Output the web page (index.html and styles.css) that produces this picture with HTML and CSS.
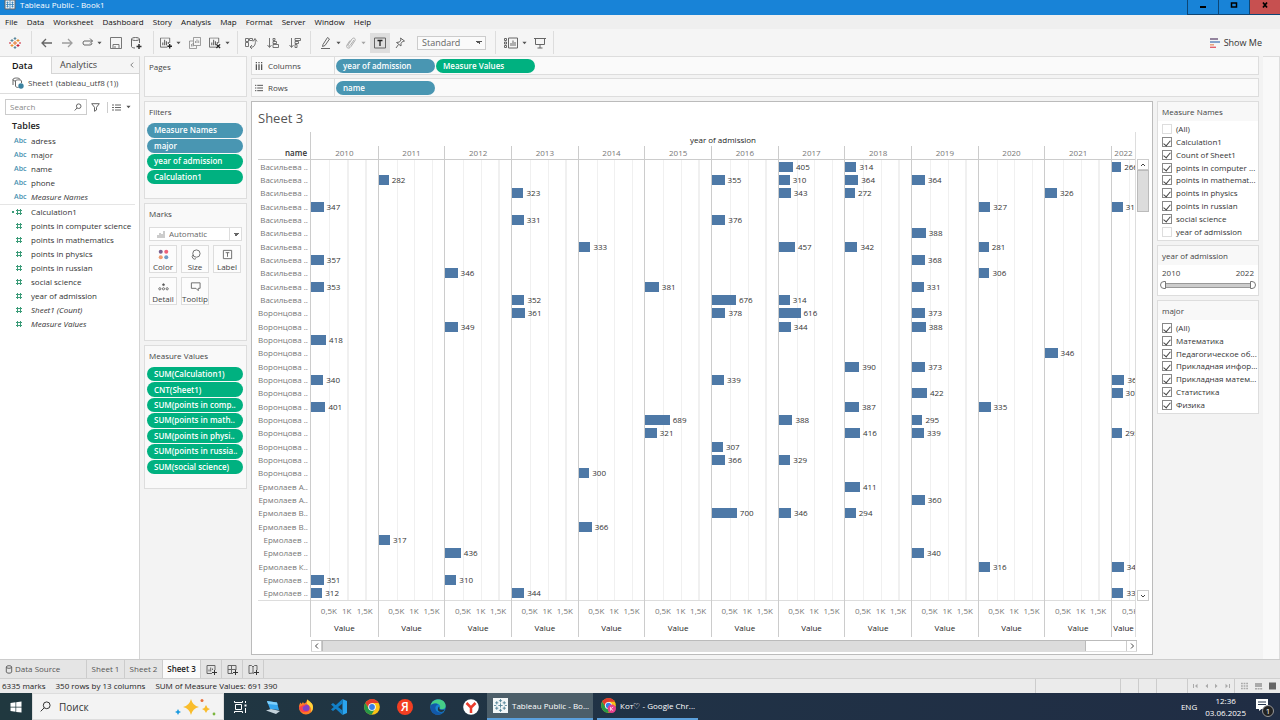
FILE: index.html
```html
<!DOCTYPE html>
<html lang="en">
<head>
<meta charset="utf-8">
<title>Tableau Public - Book1</title>
<link rel="stylesheet" href="styles.css">
</head>
<body>
<svg class="defs" aria-hidden="true">
  <symbol id="tableau" viewBox="0 0 12 12"><path d="M6 4v4M4 6h4" stroke="#e8762c"/><path d="M6 0v3M4.700 1.500h2.600M6 9v3M4.700 10.500h2.600M3 2v3M1.500 3.500h3" stroke="#5b879b"/><path d="M9 2v3M7.500 3.500h3M3 7v3M1.500 8.500h3" stroke="#eb912c"/><path d="M9 7v3M7.500 8.500h3M0 6h2M10 6h2" stroke="#c72035"/></symbol>
  <symbol id="hash" viewBox="0 0 8 8"><path d="M2.500 1v6M5.500 1v6M1 2.500h6M1 5.500h6" stroke="#3b9b78" fill="none"/></symbol>
  <symbol id="chart" viewBox="0 0 13 12"><path d="M8 10.500H.5v-10h10V6" /><path d="M3 8.500v-3M5 8.500v-6M7 8.500V4M9 5v2" stroke-width="1.200"/></symbol>
  <symbol id="caret" viewBox="0 0 6 4"><path d="M.5.5h5L3 3.500z" fill="#555" stroke="none"/></symbol>
</svg>

<header class="titlebar">
  <svg class="app-icon" viewBox="0 0 10 10"><path d="M0 0h10v9H0z" fill="#e7f2fb"/><path d="M5 0v9M1 4.500h8M2.500 1.500v6M7.500 1.500v6M1.500 2.500h2M6.500 2.500h2M1.500 6.500h2M6.500 6.500h2" stroke="#3a83b8" stroke-width=".8"/></svg>
  <span>Tableau Public - Book1</span>
  <div class="win-buttons">
    <button aria-label="Minimize"><svg viewBox="0 0 8 6"><path d="M1 4h6v2H1z"/></svg></button>
    <button aria-label="Maximize"><svg viewBox="0 0 8 6"><path d="M1.500 1h5v4h-5z" fill="none" stroke="#000" stroke-width="1.500"/></svg></button>
    <button class="close" aria-label="Close"><svg viewBox="0 0 8 6"><path d="M2 .5l4 5M6 .5l-4 5" fill="none" stroke="#000" stroke-width="1.700"/></svg></button>
  </div>
</header>

<nav class="menubar">
  <button>File</button><button>Data</button><button>Worksheet</button><button>Dashboard</button><button>Story</button><button>Analysis</button><button>Map</button><button>Format</button><button>Server</button><button>Window</button><button>Help</button>
</nav>

<div class="toolbar">
  <div class="group g1"><button aria-label="Start page"><svg class="ic"><use href="#tableau"/></svg></button></div>
  <div class="group g2">
    <button aria-label="Undo"><svg class="ic" viewBox="0 0 12 12"><path d="M11 6H1M5 2L1 6l4 4" stroke-width="1.300"/></svg></button>
    <button aria-label="Redo"><svg class="ic dim" viewBox="0 0 12 12"><path d="M1 6h10M7 2l4 4-4 4" stroke-width="1.300"/></svg></button>
    <button aria-label="Replay"><svg class="ic" viewBox="0 0 12 12"><path d="M9 8H3a2.500 2.500 0 0 1 0-4h8.500M9 1.500L11.500 4 9 6.500M9 8a2 2 0 0 0 2-2"/></svg><svg class="caret"><use href="#caret"/></svg></button>
    <button aria-label="Save"><svg class="ic" viewBox="0 0 12 12"><path d="M.5.500h11v11H.5zM3 11.500v-4h6v4M5 9v2" stroke="#777"/></svg></button>
    <button aria-label="New data source"><svg class="ic" viewBox="0 0 12 12"><ellipse cx="5.500" cy="2" rx="4" ry="1.500"/><path d="M1.500 2v7.500c0 1 2 1.500 3.500 1.500M9.500 2v4"/><path d="M9 7v5M6.500 9.500h5" stroke="#333" stroke-width="1.500"/></svg></button>
  </div>
  <div class="group g3">
    <button aria-label="New worksheet"><svg class="ic" viewBox="0 0 13 12"><use href="#chart"/><path d="M10.500 7v5M8 9.500h5" stroke="#222" stroke-width="1.500"/></svg><svg class="caret"><use href="#caret"/></svg></button>
    <button aria-label="Duplicate"><svg class="ic dim" viewBox="0 0 12 12"><path d="M4.500.500h7v8h-7zM4 4H.5v7.500h7V9M6.500 6V4M8 6V2.500M9.700 6V3.500M2.500 9.500V7M4 9.500V6"/></svg></button>
    <button aria-label="Clear sheet"><svg class="ic" viewBox="0 0 13 12"><use href="#chart"/><path d="M8 7.500l4 4M12 7.500l-4 4" stroke="#222" stroke-width="1.500"/></svg><svg class="caret"><use href="#caret"/></svg></button>
  </div>
  <div class="group g4">
    <button aria-label="Swap"><svg class="ic" viewBox="0 0 12 12"><path d="M.5 1.500h3v3h-3zM4.500 1.500h3v2h-3zM.5 5.500h3v4h-3zM9 2c2 1 2 6-1 8H5M7 8l-2 2 2 2M8 4.500l2-3 2 3" stroke-width=".9"/></svg></button>
    <button aria-label="Sort ascending"><svg class="ic" viewBox="0 0 12 12"><path d="M2.500 1v9M.5 8l2 2.500 2-2.500M6 1.500h2v2H6zM6 4.500h3.500v2H6zM6 7.500h5.500v3H6z" stroke-width=".9"/></svg></button>
    <button aria-label="Sort descending"><svg class="ic" viewBox="0 0 12 12"><path d="M2.500 1v9M.5 8l2 2.500 2-2.500M6 1.500h5.500v2H6zM6 4.500h3.500v2H6zM6 7.500h2v3H6z" stroke-width=".9"/></svg></button>
  </div>
  <div class="group g5">
    <button aria-label="Highlight"><svg class="ic" viewBox="0 0 12 12"><path d="M1 11.500h9M3 7.500L7.500.500 9.500 2 5 8.500 2.500 9.500z"/></svg><svg class="caret"><use href="#caret"/></svg></button>
    <button class="faded" aria-label="Group members"><svg class="ic" viewBox="0 0 12 12"><path d="M9 3L5 8.500c-1 1.500-2.500.5-2-.5L7 2c1.500-2 4-.5 3 1.500l-4 6c-2 3-5.500 1.500-4-1.500l3-4.500"/></svg><svg class="caret"><use href="#caret"/></svg></button>
    <button class="on" aria-label="Show mark labels" aria-pressed="true"><svg class="ic" viewBox="0 0 12 12"><path d="M.5 1h11v10H.5z"/><path d="M3.500 3.500h5M6 3.500v5.500" stroke="#222" stroke-width="1.300"/></svg></button>
    <button aria-label="Pin"><svg class="ic" viewBox="0 0 12 12"><path d="M6.500 1l4 3-2 .5-1.500 2L7 9 2.500 5.500 5.500 5l1.500-2zM4.500 7.500L2 11"/></svg></button>
    <select aria-label="Fit"><option>Standard</option></select>
  </div>
  <div class="group g6">
    <button aria-label="Show cards"><svg class="ic wide" viewBox="0 0 14 12"><path d="M.5 1.500h2v2h-2zM.5 5h2v2h-2zM.5 8.500h2v2h-2zM4.500 1h9v10h-9zM7 9V6M9 9V3.500M11 9V5"/></svg><svg class="caret"><use href="#caret"/></svg></button>
    <button aria-label="Presentation mode"><svg class="ic" viewBox="0 0 12 12"><path d="M0 1.500h12M1.500 1.500v6h9v-6M6 7.500v3.500M3.500 11h5"/></svg></button>
  </div>
  <button class="showme"><svg class="ic" viewBox="0 0 10 10"><path d="M0 1h8" stroke="#7b6888" stroke-width="1.600"/><path d="M0 4h10" stroke="#6a8fc0" stroke-width="1.600"/><path d="M0 6.800h4" stroke="#e8a07a" stroke-width="1.500"/><path d="M0 9.300h6" stroke="#e5606b" stroke-width="1.400"/></svg>Show Me</button>
</div>

<main class="workspace">
  <aside class="data-pane">
    <div class="pane-tabs"><button class="active">Data</button><button>Analytics <svg class="chev" viewBox="0 0 5 8"><path d="M4 1L1 4l3 3"/></svg></button></div>
    <div class="source"><svg class="ic" viewBox="0 0 12 12"><path d="M1 2.500c0-2 7-2 7 0M1 2.500V8M1 2.500c0 1.500 2 1.500 3 1.500M3.500 4v5c0 1 1.500 1.500 3 1.500M3.500 4c0-1.500 6-1.500 6 0v2"/><circle cx="9" cy="9" r="2.700" fill="#3c82a0" stroke="none"/></svg>Sheet1 (tableau_utf8 (1))</div>
    <div class="searchrow">
      <label class="search"><input type="text" placeholder="Search" aria-label="Search fields"><svg viewBox="0 0 8 8"><circle cx="4.700" cy="3.200" r="2.300"/><path d="M3 5L.7 7.500"/></svg></label>
      <button aria-label="Filter"><svg class="funnel" viewBox="0 0 9 9"><path d="M.7.700h7.600L5.500 4.300V7l-2 1.300v-4z"/></svg></button>
      <button class="viewas" aria-label="View as"><svg class="listic" viewBox="0 0 9 7"><path d="M0 1h2M3 1h6M0 3.500h2M3 3.500h6M0 6h2M3 6h6"/></svg><svg class="caret"><use href="#caret"/></svg></button>
    </div>
    <h2>Tables</h2>
    <ul class="fields dims">
      <li><i>Abc</i>adress</li><li><i>Abc</i>major</li><li><i>Abc</i>name</li><li><i>Abc</i>phone</li><li><i>Abc</i><em>Measure Names</em></li>
    </ul>
    <ul class="fields">
      <li class="calc"><svg><use href="#hash"/></svg>Calculation1</li>
      <li><svg><use href="#hash"/></svg>points in computer science</li>
      <li><svg><use href="#hash"/></svg>points in mathematics</li>
      <li><svg><use href="#hash"/></svg>points in physics</li>
      <li><svg><use href="#hash"/></svg>points in russian</li>
      <li><svg><use href="#hash"/></svg>social science</li>
      <li><svg><use href="#hash"/></svg>year of admission</li>
      <li><svg><use href="#hash"/></svg><em>Sheet1 (Count)</em></li>
      <li><svg><use href="#hash"/></svg><em>Measure Values</em></li>
    </ul>
  </aside>

  <div class="cards">
    <section class="card pages"><h3>Pages</h3></section>
    <section class="card filters"><h3>Filters</h3>
      <div class="pills"><span class="pill blue">Measure Names</span><span class="pill blue">major</span><span class="pill">year of admission</span><span class="pill">Calculation1</span></div>
    </section>
    <section class="card marks"><h3>Marks</h3>
      <div class="marktype"><svg viewBox="0 0 8 8"><path d="M1 8V5M3 8V3M5 8V4M7 8V1"/></svg><select aria-label="Mark type"><option>Automatic</option></select></div>
      <div class="markbtns">
        <button><svg viewBox="0 0 12 12"><g stroke="none"><circle cx="3" cy="3" r="2.200" fill="#7b6190"/><circle cx="9" cy="3" r="2.200" fill="#ee6179"/><circle cx="3" cy="9" r="2.200" fill="#ef9d70"/><circle cx="9" cy="9" r="2.200" fill="#6f9bc6"/></g></svg>Color</button>
        <button><svg viewBox="0 0 12 12"><circle cx="7" cy="5" r="4"/><path d="M3.500 6.500a2.500 2.500 0 1 0 3 4"/><path d="M3.300 6.500l.5 1"/></svg>Size</button>
        <button><svg viewBox="0 0 12 12"><path d="M1.500 1.500h9v9h-9zM4 4h4M6 4v4.500"/></svg>Label</button>
        <button><svg viewBox="0 0 12 12"><circle cx="6" cy="4" r="1" fill="#555"/><circle cx="2" cy="8.500" r="1.200"/><circle cx="6" cy="8.500" r="1.200"/><circle cx="10" cy="8.500" r="1.200"/></svg>Detail</button>
        <button><svg viewBox="0 0 12 12"><path d="M1.500 2h9.500v6H9v2.500L6.500 8h-5z"/></svg>Tooltip</button>
      </div>
    </section>
    <section class="card measures"><h3>Measure Values</h3>
      <div class="pills"><span class="pill">SUM(Calculation1)</span><span class="pill">CNT(Sheet1)</span><span class="pill">SUM(points in comp..</span><span class="pill">SUM(points in math..</span><span class="pill">SUM(points in physi..</span><span class="pill">SUM(points in russia..</span><span class="pill">SUM(social science)</span></div>
    </section>
  </div>

  <div class="center">
    <div class="shelves">
      <div class="shelf"><span class="shelf-name"><svg viewBox="0 0 9 9"><path d="M1.500 0v1.500M4.500 0v1.500M7.500 0v1.500M1.500 2.500V9M4.500 2.500V9M7.500 2.500V9" stroke-width="1.300"/></svg>Columns</span><span class="pill blue">year of admission</span><span class="pill">Measure Values</span></div>
      <div class="shelf"><span class="shelf-name"><svg viewBox="0 0 9 9"><path d="M0 1.500h1.500M0 4.500h1.500M0 7.500h1.500M2.500 1.500H9M2.500 4.500H9M2.500 7.500H9"/></svg>Rows</span><span class="pill blue">name</span></div>
    </div>
    <div class="below">
      <section class="view">
        <h1>Sheet 3</h1>
        <div class="viz">
          <div class="names"><div class="names-head">name</div><div class="rows" id="names"></div></div>
          <div class="plot">
            <div class="plot-title">year of admission</div>
            <div class="cols" id="cols"></div>
          </div>
          <div class="vscroll"><button aria-label="Scroll up"><svg viewBox="0 0 8 8"><path d="M2 5l2-2 2 2"/></svg></button><span class="thumb"></span><button aria-label="Scroll down"><svg viewBox="0 0 8 8"><path d="M2 3l2 2 2-2"/></svg></button></div>
        </div>
        <div class="hscroll"><button aria-label="Scroll left"><svg viewBox="0 0 8 8"><path d="M5 1.500L2.500 4 5 6.500"/></svg></button><span class="thumb"></span><button aria-label="Scroll right"><svg viewBox="0 0 8 8"><path d="M3 1.500L5.500 4 3 6.500"/></svg></button></div>
      </section>
      <aside class="quick">
        <section class="qcard"><h3>Measure Names</h3>
          <div class="checks">
            <label><input type="checkbox" class="pale">(All)</label>
            <label><input type="checkbox" checked>Calculation1</label>
            <label><input type="checkbox" checked>Count of Sheet1</label>
            <label><input type="checkbox" checked>points in computer ...</label>
            <label><input type="checkbox" checked>points in mathemat...</label>
            <label><input type="checkbox" checked>points in physics</label>
            <label><input type="checkbox" checked>points in russian</label>
            <label><input type="checkbox" checked>social science</label>
            <label><input type="checkbox" class="pale">year of admission</label>
          </div>
        </section>
        <section class="qcard yearcard"><h3>year of admission</h3>
          <div class="bounds"><span>2010</span><span>2022</span></div>
          <div class="slider"><input type="range" min="2010" max="2022" value="2010" aria-label="From year"><input class="hi" type="range" min="2010" max="2022" value="2022" aria-label="To year"></div>
        </section>
        <section class="qcard"><h3>major</h3>
          <div class="checks">
            <label><input type="checkbox" checked>(All)</label>
            <label><input type="checkbox" checked>Математика</label>
            <label><input type="checkbox" checked>Педагогическое об...</label>
            <label><input type="checkbox" checked>Прикладная инфор...</label>
            <label><input type="checkbox" checked>Прикладная матем...</label>
            <label><input type="checkbox" checked>Статистика</label>
            <label><input type="checkbox" checked>Физика</label>
          </div>
        </section>
      </aside>
    </div>
  </div>
  <div class="edge"></div>
</main>

<nav class="sheets">
  <button class="ds"><svg viewBox="0 0 8 9"><ellipse cx="4" cy="2" rx="2.700" ry="1.300"/><path d="M1.300 2v5c0 1.600 5.400 1.600 5.400 0V2"/></svg>Data Source</button>
  <button>Sheet 1</button><button>Sheet 2</button><button class="active">Sheet 3</button>
  <button class="new" aria-label="New worksheet"><svg viewBox="0 0 11 11"><path d="M6 9.500H1v-8h8V6M3 7.500v-2M4.700 7.500v-4M6.500 6V4.500"/><path d="M8.500 6v5M6 8.500h5" stroke="#333"/></svg></button>
  <button class="new" aria-label="New dashboard"><svg viewBox="0 0 11 11"><path d="M6 9.500H1v-8h8V6M4.500 1.500v8M1 5.500h8"/><path d="M8.500 6v5M6 8.500h5" stroke="#333"/></svg></button>
  <button class="new" aria-label="New story"><svg viewBox="0 0 11 11"><path d="M6 9.500L5 9 1 9.500v-8h2.500L5 3l1.500-1.500H9V6M5 3v6"/><path d="M8.500 6v5M6 8.500h5" stroke="#333"/></svg></button>
</nav>

<footer class="status">
  <span>6335 marks</span><span>350 rows by 13 columns</span><span>SUM of Measure Values: 691 390</span>
  <div class="cells"><b class="c1"></b><b class="c2"></b><b class="c2"></b><b class="c3"></b>
    <div class="nav"><svg viewBox="0 0 38 6"><path d="M.5 1v4M36.500 1v4" stroke="#aaa"/><path d="M4.500.800v4.400L2 3zM15 .8v4.400L12.500 3zM22 .8v4.400L24.500 3zM32.500.800v4.400L35 3z" fill="#aaa" stroke="none"/></svg></div>
    <div class="modes"><svg viewBox="0 0 36 8"><path d="M1 1.500h7M1 4h7M1 6.500h7" stroke="#aaa" stroke-width="1.700" stroke-dasharray="1.800 .8"/><path d="M15 1h7v4h-7zM15 6h2v1.500h-2zM17.600 6h2v1.500h-2zM20.200 6h2v1.500h-2z" fill="#aaa" stroke="none"/><path d="M29 .500h7v7h-7z" fill="#666" stroke="none"/></svg></div>
  </div>
</footer>

<div class="taskbar">
  <button class="start" aria-label="Start"><svg viewBox="0 0 12 12"><path d="M.5 2L5.500 1.300v4.400h-5zM6.200 1.200L11.500.500v5.200H6.200zM.5 6.400h5v4.400L.5 10.100zM6.200 6.400h5.300v5.200l-5.300-.7z" fill="#fff" stroke="none"/></svg></button>
  <label class="tsearch"><svg class="mag" viewBox="0 0 12 12"><circle cx="7.300" cy="4.700" r="3.700"/><path d="M4.600 7.400L.8 11.300"/></svg><input type="text" placeholder="Поиск" aria-label="Поиск"><svg class="sparkle" viewBox="0 0 42 20"><g stroke="none"><path d="M16 2q1.500 6.500 8 8-6.500 1.500-8 8-1.500-6.500-8-8 6.500-1.500 8-8z" fill="#f9bd2c"/><path d="M31 8q.8 3.200 4 4-3.200.8-4 4-.8-3.200-4-4 3.200-.8 4-4z" fill="#f9bd2c"/><path d="M3 12q.5 2.500 3 3-2.500.5-3 3-.5-2.500-3-3 2.500-.5 3-3z" fill="#1c9be0"/><circle cx="27" cy="3.500" r="1.500" fill="#e8703c"/><circle cx="39" cy="17" r="1.400" fill="#7bb63f"/></g></svg></label>
  <div class="apps">
    <button aria-label="Task view"><svg viewBox="0 0 16 16"><path d="M3.500 5.500h6v5h-6zM2.500 2v1.500h8V2M2.500 14v-1.500h8V14M13.500 2v2M13.500 9v5" stroke="#fff"/><path d="M12.500 5.500h2v2h-2z" fill="#fff" stroke="none"/></svg></button>
    <button aria-label="Computer"><svg viewBox="0 0 16 16"><g stroke="none"><path d="M2 2l10 1.500 2 7.500-9-1z" fill="#35a7ef"/><path d="M2 2l10 1.500.6 2.500L3 5z" fill="#7fd0fb"/><path d="M1 11.500l5-1.500 9 2-4 3z" fill="#c4d3dc"/></g></svg></button>
    <button aria-label="Firefox"><svg viewBox="0 0 16 16"><g stroke="none"><path d="M8 15.500A7 7 0 0 1 1 8c0-2 .8-3.500 1.500-4.500l1 1.500L5 3l1 1.500C7.500 4 9 3 9 .500c2 1.500 3 3 3.500 4l1-.5C14.500 5 15 7 15 8.500a7 7 0 0 1-7 7z" fill="#ff7b24"/><path d="M9 .500c3 2 6 4 6 8a7 7 0 0 1-2 5C14 9 12 7 9 5z" fill="#ffd43a"/><circle cx="8" cy="9" r="3.600" fill="#8041c8"/><path d="M1 8c3 0 3-3 7-1.500-2 0-2 1-4 2 0 3 4 4.500 7 2.500-1 3-9 4-10-3z" fill="#ff3f4c"/></g></svg></button>
    <button aria-label="Visual Studio Code"><svg viewBox="0 0 16 16"><g stroke="none"><path d="M11.500 0L16 2v12l-4.500 2z" fill="#2aa4ee"/><path d="M11.500 0v4.500L2 12 0 10.500zM0 5.500L2 4l9.500 7.500V16z" fill="#1280c8"/></g></svg></button>
    <button aria-label="Chrome"><svg viewBox="0 0 16 16" id="chrome"><g stroke="none"><circle cx="8" cy="8" r="7.800" fill="#fbc116"/><path d="M1.300 4A7.800 7.800 0 0 1 14.800 4H8L5 10z" fill="#e33b2e"/><path d="M1.300 4A7.800 7.800 0 0 0 7.500 15.800L11 10 5 10z" fill="#279847"/><circle cx="8" cy="8" r="3.800" fill="#fff"/><circle cx="8" cy="8" r="2.900" fill="#377fe8"/></g></svg></button>
    <button class="ya" aria-label="Яндекс">Я</button>
    <button aria-label="Edge"><svg viewBox="0 0 16 16"><g stroke="none"><circle cx="8" cy="8" r="7.700" fill="#1784cf"/><path d="M.5 6.500C2 1 7 0 10 .6c4 .8 6 4 5.600 7-.4 2.800-4 3.400-6 2 1.500-2 0-4.800-3-5-2.500-.2-5 1-6.100 1.900z" fill="#45cf88"/><path d="M.5 6.500C3 4 7 4 8 6c-2 0-3 2-2.500 4 .7 3 4 4.500 8 3-4 5-12 3-13-3.500z" fill="#1358a8"/><path d="M9 7.500c1 1.500 0 2 .7 2.700 1.500 1 4 .8 5-.3-.2 2-2 3-3.500 3-3 0-4.500-2.400-2.200-5.400z" fill="#213442"/></g></svg></button>
    <button aria-label="Yandex Browser"><svg viewBox="0 0 16 16"><circle cx="8" cy="8" r="7.800" fill="#fff" stroke="none"/><path d="M3.500 4L8 8.500V14M12.500 4L8 8.500" stroke="#eb3b2c" stroke-width="2.500"/></svg></button>
  </div>
  <button class="task current"><svg viewBox="0 0 14 14"><path d="M0 0h14v14H0z" fill="#f4f7f8" stroke="none"/><path d="M7 5v4M5 7h4M7 1v3M5.500 2.500h3M7 10v3M5.500 11.500h3M3.500 3v3M2 4.500h3M10.500 3v3M9 4.500h3M3.500 8v3M2 9.500h3M10.500 8v3M9 9.500h3M1 7h2M11 7h2" stroke="#4c8095" stroke-width=".8"/></svg>Tableau Public - Bo...</button>
  <button class="task"><svg viewBox="0 0 16 16"><use href="#chrome"/><circle cx="11.500" cy="11.500" r="4.500" fill="#e83e8c" stroke="none"/><path d="M10.200 9.500v4M13 9.500l-2.500 2 2.500 2" stroke="#fff" stroke-width=".8"/></svg>Кот♡ - Google Chr...</button>
  <div class="tray"><span>ENG</span><time>12:36<br>03.06.2025</time>
    <button class="note" aria-label="Notifications"><svg viewBox="0 0 14 14"><path d="M0 0h12v10H5.500L3 12v-2H0z" fill="#fff" stroke="none"/><path d="M2 3h8M2 5.500h8" stroke="#24344a"/></svg><span class="badge">1</span></button></div>
</div>
<script src="chart.js"></script>
</body>
</html>
```
FILE: styles.css
```css
* { box-sizing: border-box; }
body { margin: 0; height: 100vh; display: flex; flex-direction: column; overflow: hidden; background: #f3f3f3; color: #444; font: 8px/12px "Open Sans", "Noto Sans", sans-serif; }
button, input, select { font: inherit; color: inherit; margin: 0; padding: 0; border: 0; background: none; }
h1, h2, h3, ul { margin: 0; padding: 0; font-size: 8px; font-weight: 400; list-style: none; }
svg { display: block; flex: none; fill: none; stroke: #666; overflow: visible; }
.defs { width: 0; height: 0; position: absolute; }
.caret { width: 5px; height: 4px; }

.titlebar { flex: none; height: 15px; display: flex; align-items: center; padding: 0 0 5px 5px; gap: 5px; background: #1883d7; color: #fff; }
.app-icon { width: 10px; height: 10px; }
.win-buttons { margin-left: auto; display: flex; height: 15px; align-self: flex-start; }
.win-buttons button { width: 31px; border-left: 1px solid #0d4675; border-bottom: 1px solid #0d4675; display: flex; justify-content: center; padding-top: 2px; }
.win-buttons .close { background: #c75050; }
.win-buttons svg { width: 8px; height: 6px; fill: #000; stroke: none; }

.menubar { flex: none; height: 14px; display: flex; gap: 9px; padding-left: 5px; background: #efefef; color: #111; }
.menubar button { line-height: 14px; }

.toolbar { flex: none; height: 27px; display: flex; align-items: center; background: #f5f5f5; }
.group { height: 23px; display: flex; align-items: center; border-right: 1px solid #ddd; }
.group button { display: flex; align-items: center; gap: 4px; }
.ic { width: 12px; height: 12px; }
.ic.wide { width: 14px; }
.dim { opacity: .6; }
.faded { opacity: .5; }
.g1 { width: 32px; padding-left: 9px; }
.g2 { width: 122px; padding-left: 9px; gap: 8px; }
.g3 { width: 84px; padding-left: 6px; gap: 8px; }
.g4 { width: 73px; padding-left: 7px; gap: 10px; }
.g5 { width: 185px; padding-left: 9px; gap: 4px; }
.g6 { width: 58px; padding-left: 8px; gap: 7px; }
.group .on { background: #dedede; width: 20px; height: 20px; justify-content: center; }
.g5 select { width: 69px; height: 14px; border: 1px solid #ccc; color: #666; padding-left: 4px; line-height: 12px; margin-left: 7px; }
.showme { margin-left: auto; margin-right: 18px; display: flex; align-items: center; gap: 4px; font-size: 9px; color: #333; }
.showme .ic { width: 10px; height: 10px; }

.workspace { flex: 1; min-height: 0; display: flex; }
.data-pane { width: 140px; background: #fff; border-right: 1px solid #d5d5d5; border-top: 1px solid #ddd; }
.pane-tabs { display: flex; height: 17px; font-size: 9px; }
.pane-tabs button { flex: 1; display: flex; align-items: center; justify-content: space-between; padding: 0 5px 0 8px; background: #f5f5f5; border-bottom: 1px solid #d5d5d5; border-left: 1px solid #d5d5d5; }
.pane-tabs .active { flex: none; width: 51px; padding-left: 12px; background: #fff; border: 0; color: #111; font-weight: 600; }
.chev { width: 4px; height: 8px; }
.source { height: 20px; display: flex; align-items: center; gap: 4px; padding: 0 0 1px 12px; border-bottom: 1px solid #ddd; }
.searchrow { display: flex; align-items: center; padding: 5px 8px 5px 5px; gap: 4px; }
.search { width: 86px; height: 16px; display: flex; align-items: center; border: 1px solid #ccc; padding: 0 4px; }
.search input { flex: 1; min-width: 0; width: 0; }
.search svg { width: 8px; height: 8px; }
::placeholder { color: #888; opacity: 1; }
.funnel { width: 9px; height: 9px; }
.viewas { display: flex; align-items: center; gap: 5px; border-left: 1px solid #ccc; padding: 2px 0 2px 4px; margin-left: 3px; }
.listic { width: 9px; height: 7px; }
.data-pane h2 { padding-left: 12px; font-size: 9px; font-weight: 600; color: #222; line-height: 12px; }
.fields { padding-top: 2px; }
.fields li { height: 14px; display: flex; align-items: center; white-space: nowrap; padding-left: 14px; color: #333; }
.fields i { width: 17px; font-style: normal; font-size: 7px; font-weight: 600; color: #4690b0; }
.fields svg { width: 10px; height: 8px; margin-right: 7px; }
.dims { margin-right: 4px; border-bottom: 1px solid #e5e5e5; }
.dims + .fields { padding-top: 0; }
.calc::before { content: ""; width: 2px; height: 2px; margin-left: -2px; background: #3b9b78; }

.cards { width: 103px; margin-left: 4px; display: flex; flex-direction: column; gap: 4px; }
.card { border: 1px solid #ddd; background: #f9f9f9; padding: 4px 3px; }
.card h3, .qcard h3 { line-height: 12px; color: #444; }
.card h3 { padding: 0 1px; }
.pages { height: 41px; }
.filters { height: 98px; }
.marks { height: 138px; }
.measures { height: 144px; }
.pills { display: grid; grid-auto-rows: 1fr; row-gap: 1px; margin: 5px 0 0 -1px; height: 61px; }
.measures .pills { height: 107px; }
.pill { display: flex; align-items: center; padding-left: 7px; border-radius: 8px; background: #00b180; color: #fff; font-weight: 600; white-space: nowrap; overflow: hidden; min-height: 0; line-height: 12px; }
.blue { background: #4996b2; }
.marktype { display: flex; align-items: center; margin: 7px 1px 4px; height: 14px; border: 1px solid #ddd; background: #fff; padding-left: 7px; gap: 4px; }
.marktype svg { width: 8px; height: 8px; stroke: #999; }
.marktype select { flex: 1; min-width: 0; height: 12px; color: #666; }
select { appearance: none; }
.marktype select { background: linear-gradient(to bottom left, #666 50%, transparent 50%) right 5px center / 3px 3px no-repeat, linear-gradient(to bottom right, #666 50%, transparent 50%) right 2px center / 3px 3px no-repeat, linear-gradient(#ddd, #ddd) right 11px center / 1px 12px no-repeat; }
.g5 select { background: linear-gradient(to bottom left, #555 50%, transparent 50%) right 6px center / 3px 3px no-repeat, linear-gradient(to bottom right, #555 50%, transparent 50%) right 3px center / 3px 3px no-repeat, #fafafa; font-size: 9px; }
.markbtns { display: grid; grid-template-columns: repeat(3, 28px); gap: 4px; justify-content: start; margin-left: 1px; }
.markbtns button { height: 28px; border: 1px solid #ddd; background: #fcfcfc; display: flex; flex-direction: column; align-items: center; gap: 1px; padding-top: 3px; line-height: 12px; }
.markbtns svg { width: 11px; height: 11px; }

.center { flex: 1; min-width: 0; margin-left: 4px; display: flex; flex-direction: column; padding-bottom: 4px; }
.shelves { display: flex; flex-direction: column; gap: 4px; margin-bottom: 4px; padding-right: 4px; }
.shelf { height: 19px; display: flex; align-items: center; border: 1px solid #ddd; background: #fafafa; gap: 1px; }
.shelves { gap: 3px; }
.shelf-name { width: 83px; height: 17px; display: flex; align-items: center; gap: 5px; padding-left: 3px; border-right: 1px solid #ddd; color: #444; }
.shelf-name svg { width: 8px; height: 8px; stroke: #444; }
.shelf .pill { width: 99px; height: 14px; }
.below { flex: 1; min-height: 0; display: flex; gap: 4px; }
.view { flex: 1; min-width: 0; border: 1px solid #bbb; background: #fff; display: flex; flex-direction: column; padding: 7px 3px 2px 6px; }
.view h1 { font-size: 13px; line-height: 18px; color: #555; }
.viz { flex: 1; min-height: 0; display: flex; margin-top: 5px; }
.names { width: 52px; display: flex; flex-direction: column; padding-bottom: 36px; color: #777; }
.names-head { height: 28px; padding: 15px 3px 0 0; text-align: right; color: #333; font-weight: 600; border-bottom: 1px solid #ccc; }
.rows { flex: 1; min-height: 0; display: grid; grid-auto-rows: 1fr; border-bottom: 1px solid #ddd; }
.rows > div { min-height: 0; display: flex; align-items: center; line-height: 12px; white-space: nowrap; }
.names .rows > div { justify-content: flex-end; padding-right: 3px; }
.plot { flex: 1; min-width: 0; display: flex; flex-direction: column; border-left: 1px solid #ccc; border-right: 1px solid #ddd; }
.plot-title { height: 14px; line-height: 15px; text-align: center; color: #222; }
.cols { flex: 1; min-height: 0; display: grid; grid-template-columns: repeat(12, 25fr) 9fr; }
.col { min-width: 0; display: flex; flex-direction: column; overflow: hidden; border-left: 1px solid #ccc; }
.col:first-child { border-left: 0; }
.year { height: 14px; line-height: 14px; text-align: center; color: #777; border-bottom: 1px solid #ccc; white-space: nowrap; }
.col .rows { color: #333; background: linear-gradient(90deg, transparent 27%, #f0f0f0 27%, #f0f0f0 29%, transparent 29%, transparent 54%, #f0f0f0 54%, #f0f0f0 56%, transparent 56%, transparent 81%, #f0f0f0 81%, #f0f0f0 83%, transparent 83%); }
.col:last-child .rows { background: linear-gradient(90deg, transparent 75%, #f0f0f0 75%, #f0f0f0 79%, transparent 79%); }
.bar { flex: none; height: 10px; background: #4e79a7; margin-right: 3px; }
.axis { height: 36px; display: flex; flex-direction: column; justify-content: space-between; padding: 4px 0 3px; text-align: center; color: #222; }
.ticks { display: grid; grid-template-columns: 1fr 2fr 2fr 2fr; padding-right: 4px; color: #777; white-space: nowrap; }
.ticks span { display: flex; justify-content: center; }
.col:last-child .ticks { grid-template-columns: 18px; padding: 0 0 0 9px; }
.vscroll { width: 12px; display: flex; flex-direction: column; margin: 27px 0 36px 1px; }
.vscroll button { height: 11px; }
.vscroll .thumb { height: 42px; margin-bottom: auto; }
.vscroll button, .hscroll button { flex: none; border: 1px solid #ccc; display: flex; align-items: center; justify-content: center; background: #fff; }
.vscroll svg, .hscroll svg { width: 8px; height: 8px; stroke: #444; }
.thumb { background: #dcdcdc; border: 1px solid #bbb; }
.hscroll { height: 12px; display: flex; margin: 3px 12px 0 53px; border-bottom: 1px solid #ddd; border-top: 1px solid #bbb; }
.hscroll button { width: 11px; border-width: 0 1px; }
.hscroll .thumb { flex: 0 1 764px; border-width: 0 1px; margin-right: auto; }
.quick { width: 106px; padding-right: 4px; display: flex; flex-direction: column; gap: 4px; }
.qcard { border: 1px solid #ddd; background: #fff; padding-bottom: 2px; }
.qcard h3 { padding: 4px 4px 3px; background: #f8f8f8; white-space: nowrap; height: 19px; }
.checks { display: grid; grid-auto-rows: 1fr; height: 115px; margin-top: 2px; color: #333; }
.qcard:last-child .checks { height: 89px; }
.checks label { min-height: 0; display: flex; align-items: center; gap: 4px; padding-left: 4px; white-space: nowrap; line-height: 12px; }
input[type=checkbox] { appearance: none; flex: none; width: 10px; height: 10px; border: 1px solid #888; background: #fff; display: grid; place-items: center; }
input.pale { border-color: #ddd; }
input[type=checkbox]:checked::after { content: ""; width: 3px; height: 6px; border: solid #444; border-width: 0 1px 1px 0; transform: rotate(40deg); }
.yearcard { height: 51px; }
.bounds { display: flex; justify-content: space-between; padding: 2px 4px 0; }
.slider { position: relative; height: 12px; margin: 0 2px; }
.slider::before { content: ""; position: absolute; left: 5px; right: 5px; top: 4px; height: 3px; background: #ccc; border-bottom: 1px solid #999; border-top: 1px solid #999; }
.slider input { position: absolute; inset: 0; width: 100%; height: 12px; appearance: none; pointer-events: none; }
.slider input::-webkit-slider-thumb { appearance: none; width: 6px; height: 8px; border: 1px solid #777; background: #fff; border-radius: 4px 0 0 4px; pointer-events: auto; }
.slider .hi::-webkit-slider-thumb { border-radius: 0 4px 4px 0; }
.edge { width: 17px; background: #f9f9f9; border-top: 1px solid #ddd; border-right: 1px solid #ddd; }

.sheets { flex: none; height: 20px; display: flex; background: #e5e5e5; border-top: 1px solid #ccc; border-bottom: 1px solid #d0d0d0; color: #555; }
.sheets button { width: 38px; border-right: 1px solid #ccc; }
.sheets .ds { width: 87px; display: flex; align-items: center; gap: 2px; padding-left: 5px; }
.ds svg { width: 8px; height: 9px; }
.sheets .active { background: #fafafa; color: #222; font-weight: 600; }
.sheets .new { width: 21px; display: grid; place-items: center; }
.new svg { width: 11px; height: 11px; }
.status { flex: none; height: 14px; display: flex; gap: 10px; padding-left: 2px; line-height: 14px; background: #ebebeb; color: #222; }
.cells { margin-left: auto; display: flex; }
.cells > * { border-left: 1px solid #ccc; display: flex; align-items: center; }
.c1 { width: 85px; }
.c2 { width: 18px; }
.c3 { width: 31px; }
.nav { width: 47px; padding-left: 5px; }
.nav svg { width: 38px; height: 6px; }
.modes { width: 46px; padding-left: 5px; }
.modes svg { width: 36px; height: 8px; }

.taskbar { flex: none; height: 27px; display: flex; background: linear-gradient(90deg, #20383f, #203246 50%, #202d44); color: #fff; }
.start { width: 32px; display: grid; place-items: center; }
.start svg { width: 12px; height: 12px; }
.tsearch { width: 192px; display: flex; align-items: center; background: #f3f3f3; border: 1px solid #ddd; color: #333; padding: 0 6px 0 7px; }
.mag { width: 11px; height: 11px; stroke: #222; margin-right: 8px; }
.tsearch input { flex: 1; min-width: 0; font-size: 10px; }
.tsearch ::placeholder { color: #333; }
.sparkle { width: 42px; height: 20px; }
.apps { display: flex; align-items: center; gap: 17px; padding-left: 8px; width: 263px; }
.apps button, .apps svg { width: 16px; height: 16px; flex: none; }
.apps .ya { border-radius: 50%; background: #f33f22; font-size: 12px; line-height: 16px; font-weight: 600; text-align: center; }
.task { width: 106px; display: flex; align-items: center; gap: 4px; padding-left: 6px; border-bottom: 2px solid #5ba0dc; white-space: nowrap; margin-right: 4px; }
.task svg { width: 15px; height: 15px; }
.task + .task { padding-left: 4px; width: 101px; }
.current { background: #4c5e69; }
.tray { margin-left: auto; display: flex; align-items: center; gap: 8px; padding-right: 5px; }
.tray time { text-align: center; }
.note { position: relative; width: 21px; height: 20px; }
.note svg { width: 14px; height: 14px; margin: 2px 0 4px 2px; }
.badge { position: absolute; right: 1px; bottom: 0; width: 12px; height: 12px; border-radius: 50%; border: 1px solid #999; background: #222; line-height: 10px; text-align: center; }
```
FILE: chart.js
```js
const SCALE = 1850;
const LAST_SCALE = 666;
const years = [2010, 2011, 2012, 2013, 2014, 2015, 2016, 2017, 2018, 2019, 2020, 2021, 2022];
const V = 'Васильева ..', W = 'Воронцова ..', E = 'Ермолаев ..';
const rows = [
  [V, { 2017: 405, 2018: 314, 2022: 266 }],
  [V, { 2011: 282, 2016: 355, 2017: 310, 2018: 364, 2019: 364 }],
  [V, { 2013: 323, 2017: 343, 2018: 272, 2021: 326 }],
  [V, { 2010: 347, 2020: 327, 2022: 311 }],
  [V, { 2013: 331, 2016: 376 }],
  [V, { 2019: 388 }],
  [V, { 2014: 333, 2017: 457, 2018: 342, 2020: 281 }],
  [V, { 2010: 357, 2019: 368 }],
  [V, { 2012: 346, 2020: 306 }],
  [V, { 2010: 353, 2015: 381, 2019: 331 }],
  [V, { 2013: 352, 2016: 676, 2017: 314 }],
  [W, { 2013: 361, 2016: 378, 2017: 616, 2019: 373 }],
  [W, { 2012: 349, 2017: 344, 2019: 388 }],
  [W, { 2010: 418 }],
  [W, { 2021: 346 }],
  [W, { 2018: 390, 2019: 373 }],
  [W, { 2010: 340, 2016: 339, 2022: 360 }],
  [W, { 2019: 422, 2022: 307 }],
  [W, { 2010: 401, 2018: 387, 2020: 335 }],
  [W, { 2015: 689, 2017: 388, 2019: 295 }],
  [W, { 2015: 321, 2018: 416, 2019: 339, 2022: 295 }],
  [W, { 2016: 307 }],
  [W, { 2016: 366, 2017: 329 }],
  [W, { 2014: 300 }],
  ['Ермолаев А..', { 2018: 411 }],
  ['Ермолаев А..', { 2019: 360 }],
  ['Ермолаев В..', { 2016: 700, 2017: 346, 2018: 294 }],
  ['Ермолаев В..', { 2014: 366 }],
  [E, { 2011: 317 }],
  [E, { 2012: 436, 2019: 340 }],
  ['Ермолаев К..', { 2020: 316, 2022: 340 }],
  [E, { 2010: 351, 2012: 310 }],
  [E, { 2010: 312, 2013: 344, 2022: 330 }]
];

document.getElementById('names').innerHTML = rows.map(([name]) => `<div>${name}</div>`).join('');

document.getElementById('cols').innerHTML = years.map(year => {
  const last = year === 2022;
  const scale = last ? LAST_SCALE : SCALE;
  const cells = rows.map(([, values]) => {
    const value = values[year];
    return value ? `<div><span class="bar" style="width:${(value / scale * 100).toFixed(1)}%"></span>${value}</div>` : '<div></div>';
  }).join('');
  const ticks = last ? '<span>0,5K</span>' : '<i></i><span>0,5K</span><span>1K</span><span>1,5K</span>';
  return `<div class="col"><div class="year">${year}</div><div class="rows">${cells}</div><div class="axis"><div class="ticks">${ticks}</div><div>Value</div></div></div>`;
}).join('');
```
